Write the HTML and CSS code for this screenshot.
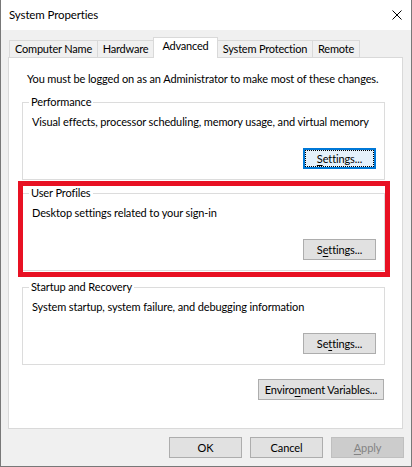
FILE: index.html
```html
<!DOCTYPE html>
<html lang="en">
<head>
<meta charset="utf-8">
<title>System Properties</title>
<link rel="stylesheet" href="styles.css">
</head>
<body>
<div class="window">
  <div class="titlebar">
    <span class="title">System Properties</span>
    <span class="close"><svg width="10" height="10" viewBox="0 0 10 10"><path d="M0.5 0.5L9.5 9.5M9.5 0.5L0.5 9.5" stroke="#000" stroke-width="1" fill="none"/></svg></span>
  </div>
  <div class="content">
    <div class="tabs">
      <div class="tab t-cn">Computer Name</div>
      <div class="tab t-hw">Hardware</div>
      <div class="tab t-adv active">Advanced</div>
      <div class="tab t-sp">System Protection</div>
      <div class="tab t-rm">Remote</div>
    </div>
    <div class="panel">
      <p class="note">You must be logged on as an Administrator to make most of these changes.</p>
      <fieldset class="group g-perf">
        <legend>Performance</legend>
        <p class="desc">Visual effects, processor scheduling, memory usage, and virtual memory</p>
        <div class="btn-row"><button class="btn focused"><u>S</u>ettings...</button></div>
      </fieldset>
      <div class="highlight">
        <fieldset class="group g-prof">
          <legend>User Profiles</legend>
          <p class="desc">Desktop settings related to your sign-in</p>
          <div class="btn-row"><button class="btn">S<u>e</u>ttings...</button></div>
        </fieldset>
        <div class="mark"></div>
      </div>
      <fieldset class="group g-start">
        <legend>Startup and Recovery</legend>
        <p class="desc">System startup, system failure, and debugging information</p>
        <div class="btn-row"><button class="btn">Se<u>t</u>tings...</button></div>
      </fieldset>
      <div class="env-row"><button class="btn env">Enviro<u>n</u>ment Variables...</button></div>
    </div>
    <div class="footer">
      <button class="btn">OK</button>
      <button class="btn">Cancel</button>
      <button class="btn disabled" disabled><u>A</u>pply</button>
    </div>
  </div>
</div>
</body>
</html>
```
FILE: styles.css
```css
html, body {
  margin: 0;
  padding: 0;
}
body {
  width: 412px;
  height: 467px;
  overflow: hidden;
  background: #f0f0f0;
  font-family: Lato, "Noto Sans", sans-serif;
  font-size: 11px;
  letter-spacing: -0.12px;
  line-height: 16px;
  color: #000;
}
.window {
  box-sizing: border-box;
  width: 412px;
  height: 467px;
  border: 1px solid #787878;
  border-top: none;
  background: #f0f0f0;
}
.titlebar {
  height: 30px;
  background: #fff;
  display: flex;
  align-items: center;
  justify-content: space-between;
  padding: 0 9px 0 8px;
}
.title {
  line-height: 16px;
  font-size: 11.5px;
}
.close {
  display: flex;
  width: 10px;
  height: 10px;
}
.content {
  padding: 7px 8px 0 7px;
}
.tabs {
  display: flex;
  align-items: flex-end;
  height: 20px;
  padding-left: 1px;
  position: relative;
  z-index: 1;
}
.tab {
  box-sizing: border-box;
  height: 17px;
  border: 1px solid #d9d9d9;
  border-bottom: none;
  background: #f0f0f0;
  text-align: center;
  line-height: 16px;
  margin-left: -1px;
  white-space: nowrap;
  letter-spacing: -0.2px;
}
.t-cn { width: 89px; margin-left: 0; }
.t-hw { width: 57px; }
.t-adv { width: 65px; }
.t-sp { width: 96px; }
.t-rm { width: 48px; }
.tab.active {
  height: 21px;
  margin-bottom: -1px;
  background: #fff;
  position: relative;
  z-index: 2;
}
.panel {
  box-sizing: border-box;
  height: 372px;
  border: 1px solid #d9d9d9;
  background: #fff;
  padding: 13px 17px 0 13px;
}
.note {
  margin: 0 0 7px 0;
  padding-left: 5px;
  white-space: nowrap;
}
.group {
  margin: 0;
  border: 1px solid #dcdcdc;
  padding: 4px 8px 10px 9px;
  min-width: 0;
}
.group legend {
  padding: 0 2px;
  margin-left: -3px;
  line-height: 16px;
}
.desc {
  margin: 0;
  white-space: nowrap;
}
.btn-row {
  display: flex;
  justify-content: flex-end;
  margin-top: 18px;
}
.highlight {
  position: relative;
  margin-top: 5px;
}
.mark {
  position: absolute;
  left: -4px;
  top: -4px;
  right: -5px;
  bottom: -6px;
  border: 5px solid #e81123;
  pointer-events: none;
}
.g-start {
  margin-top: 8px;
}
.btn {
  box-sizing: border-box;
  width: 73px;
  height: 21px;
  border: 1px solid #adadad;
  background: #e1e1e1;
  font-family: inherit;
  font-size: 11px;
  letter-spacing: -0.12px;
  line-height: 16px;
  color: #000;
  padding: 0;
  margin: 0;
  text-align: center;
  white-space: nowrap;
}
.btn u {
  text-underline-offset: 2px;
}
.btn.focused {
  border: 2px solid #0078d7;
  background: #e5f1fb;
  outline: 1px dotted #000;
  outline-offset: -3px;
}
.env-row {
  display: flex;
  justify-content: flex-end;
  margin-top: 14px;
  margin-right: 1px;
}
.btn.env {
  width: 126px;
}
.footer {
  display: flex;
  justify-content: flex-end;
  gap: 8px;
  margin-top: 8px;
  margin-right: -1px;
}
.btn.disabled {
  background: #cccccc;
  border-color: #bfbfbf;
  color: #838383;
}
```
